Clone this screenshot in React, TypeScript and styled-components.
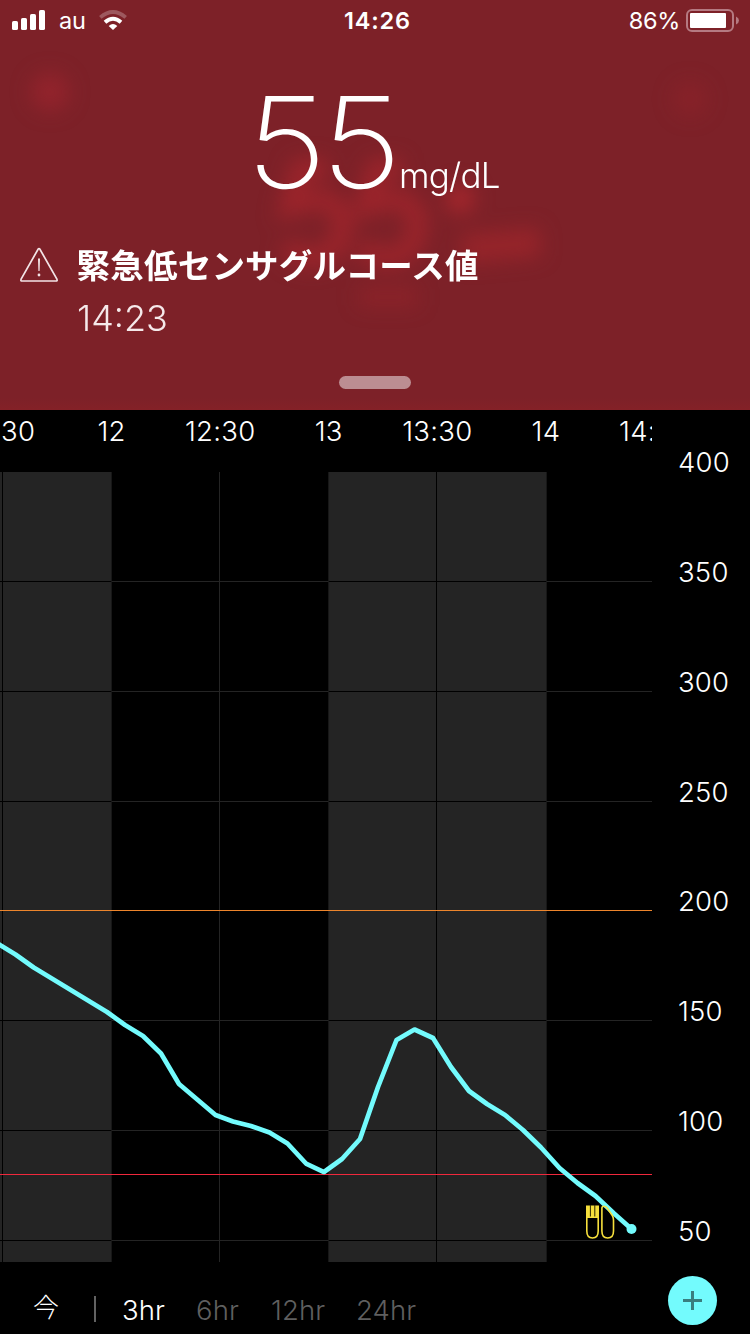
import React from "react";
import styled, { createGlobalStyle } from "styled-components";

const GlobalStyle = createGlobalStyle`
  * { box-sizing: border-box; }
  body {
    margin: 0;
    background: #000;
    color: #fff;
    font-family: Inter, "Noto Sans CJK JP", sans-serif;
  }
`;

const Screen = styled.main`
  width: 750px;
  height: 1334px;
  display: flex;
  flex-direction: column;
  overflow: hidden;
  background: #000;
`;

const Alert = styled.header`
  position: relative;
  height: 410px;
  flex: none;
  display: flex;
  flex-direction: column;
  overflow: hidden;
  background: linear-gradient(#7d2128 0, #7d2128 398px, #842127 410px);
`;

const Glow = styled.svg`
  position: absolute;
  inset: 0;
`;

const StatusBar = styled.div`
  position: relative;
  height: 40px;
  display: grid;
  grid-template-columns: 1fr auto 1fr;
  align-items: center;
  padding: 0 11px 0 12px;
  font-size: 24px;
  line-height: 38px;
`;

const StatusSide = styled.div<{ $end?: boolean }>`
  display: flex;
  align-items: center;
  justify-content: ${(p) => (p.$end ? "flex-end" : "flex-start")};
  height: 40px;
`;

const Carrier = styled.span`
  margin: 2px 13px 0 14px;
  font-size: 23.5px;
  letter-spacing: -0.2px;
`;

const Clock = styled.span`
  padding: 2px 0 0 4px;
  font-size: 23.5px;
  font-weight: 600;
  letter-spacing: 0.8px;
`;

const Percent = styled.span`
  margin: 2px 6px 0 0;
  font-size: 23.5px;
  letter-spacing: -0.3px;
`;

const Reading = styled.div`
  position: relative;
  display: flex;
  align-items: baseline;
  height: 195px;
  padding: 40px 0 0 246px;
`;

const ReadingValue = styled.span`
  width: 153px;
  font-size: 127px;
  font-weight: 165;
  line-height: 124px;
  letter-spacing: -5.2px;
  transform: scaleX(1.1);
  transform-origin: left;
`;

const ReadingUnit = styled.span`
  font-size: 35px;
  font-weight: 300;
  letter-spacing: -0.8px;
`;

const Message = styled.div`
  position: relative;
  display: grid;
  grid-template-columns: 38px 1fr;
  column-gap: 19px;
  padding-left: 20px;
`;

const WarningIcon = styled.svg`
  margin-top: 12px;
`;

const MessageTitle = styled.h1`
  margin: 0 0 2px -0.5px;
  font-size: 33.5px;
  font-weight: 700;
  line-height: 58px;
  letter-spacing: 0.22px;
  font-family: "Noto Sans CJK JP", sans-serif;
`;

const MessageTime = styled.time`
  grid-column: 2;
  font-size: 36px;
  font-weight: 300;
  line-height: 46px;
  color: #f5e9ea;
`;

const Handle = styled.div`
  position: relative;
  width: 72px;
  height: 13px;
  margin: 35px auto 0;
  border-radius: 7px;
  background: #bc8d92;
`;

const ChartArea = styled.section`
  display: flex;
  height: 852px;
  flex: none;
`;

const ChartColumn = styled.div`
  width: 652px;
  overflow: hidden;
`;

const TimeAxis = styled.div`
  display: flex;
  height: 62px;
  margin-left: -51.3px;
`;

const TimeLabel = styled.span`
  flex: none;
  width: 108.6px;
  text-align: center;
  font-size: 27.5px;
  font-weight: 300;
  line-height: 42px;
  letter-spacing: 0.3px;
`;

const Plot = styled.svg`
  display: block;
`;

const ValueAxis = styled.div`
  display: flex;
  flex-direction: column;
  padding: 30px 0 0 26px;
`;

const ValueLabel = styled.span`
  flex: none;
  height: 109.86px;
  font-size: 27.5px;
  font-weight: 300;
  line-height: 44px;
  letter-spacing: 0.2px;
`;

const Footer = styled.footer`
  display: flex;
  align-items: center;
  height: 72px;
  padding: 4px 33px 0 32px;
`;

const NowButton = styled.button`
  width: 61px;
  margin: 12px 0 0 1px;
  padding: 0;
  border: 0;
  background: none;
  color: #fff;
  font: 300 26px/40px "Noto Sans CJK JP", sans-serif;
  text-align: left;
`;

const Divider = styled.span`
  width: 2px;
  height: 26px;
  margin: 18px 26px 0 0;
  background: #626262;
`;

const Range = styled.button<{ $active?: boolean; $width: number }>`
  width: ${(p) => p.$width}px;
  padding: 0;
  border: 0;
  background: none;
  color: ${(p) => (p.$active ? "#fff" : "#5f5f5f")};
  font: 300 27.5px/40px Inter, sans-serif;
  letter-spacing: 0.1px;
  text-align: left;
  margin-top: 20px;
`;

const AddButton = styled.button`
  display: grid;
  place-items: center;
  width: 49px;
  height: 49px;
  margin: 0 0 0 auto;
  padding: 0;
  border: 0;
  border-radius: 50%;
  background: #73fbfd;
`;

const times = ["11:30", "12", "12:30", "13", "13:30", "14", "14:30"];
const values = [400, 350, 300, 250, 200, 150, 100, 50];
const ranges = [
  { label: "3hr", width: 74, active: true },
  { label: "6hr", width: 75 },
  { label: "12hr", width: 85 },
  { label: "24hr", width: 70 },
];

const readings = [
  [-3, 471], [0, 473], [15.5, 482.5], [33.7, 495.5], [107, 540], [125, 553], [143, 564],
  [161, 581.5], [179, 612], [215.5, 643], [233, 649.5], [251, 654], [269.5, 660.5],
  [287.5, 671.5], [306, 691.5], [324, 700], [342, 687], [360, 667], [378, 615],
  [396.5, 568], [414.5, 557.5], [433, 566], [451, 595], [469, 619], [487, 632],
  [505, 643], [523, 658], [541, 675.5], [559.5, 696], [577.5, 711], [595.5, 724],
  [613.5, 741], [631.5, 757],
];

const gridRows = [109, 219, 329, 438, 548, 658, 768];

const Chart = () => (
  <Plot width="652" height="790" viewBox="0 0 652 790">
    <g shapeRendering="crispEdges">
      <rect width="111" height="790" fill="#242424" />
      <rect x="329" width="217" height="790" fill="#242424" />
      {gridRows.map((y) => (
        <g key={y}>
          <rect y={y} width="652" height="1" fill="#242424" />
          <rect y={y} width="111" height="1" fill="#000" />
          <rect x="329" y={y} width="217" height="1" fill="#000" />
        </g>
      ))}
      <rect x="2" width="1" height="790" fill="#000" />
      <rect x="219" width="1" height="790" fill="#242424" />
      <rect x="436" width="1" height="790" fill="#000" />
      <rect x="111" width="1" height="790" fill="#171717" />
      <rect x="328" width="1" height="790" fill="#171717" />
      <rect x="546" width="1" height="790" fill="#171717" />
      <rect y="438" width="652" height="1" fill="#ed852c" />
      <rect y="702" width="652" height="1" fill="#f0283c" />
    </g>
    <polyline
      points={readings.map((p) => p.join(",")).join(" ")}
      fill="none"
      stroke="#73fbfd"
      strokeWidth="4.7"
      strokeLinejoin="round"
    />
    <circle cx="631.5" cy="757" r="5" fill="#73fbfd" />
    <g fill="none" stroke="#f7e03c" strokeWidth="1.6">
      <path d="M586.8 734V759Q586.8 766 592.5 766Q598.2 766 598.2 759V734" />
      <path d="M586 733.5H599V746H586Z" fill="#f7e03c" stroke="none" />
      <path d="M590.4 733V744.5M594.8 733V744.5" stroke="#2b2600" strokeWidth="1" />
      <path d="M601.9 736Q601.9 734.2 604 734.2Q606 734.2 607.5 736.5L612.3 743.5Q613.5 745.5 613.5 748V759Q613.5 766 607.7 766Q601.9 766 601.9 759Z" />
    </g>
  </Plot>
);

const Backdrop = () => (
  <Glow width="750" height="410" viewBox="0 0 750 410" aria-hidden="true">
    <defs>
      <filter id="soft" filterUnits="userSpaceOnUse" x="0" y="0" width="750" height="410" colorInterpolationFilters="sRGB">
        <feGaussianBlur stdDeviation="10" />
      </filter>
    </defs>
    <g filter="url(#soft)" fill="none" stroke="#a8262c" strokeWidth="19">
      <path d="M328 169H300L290 206Q340 188 343 224Q340 258 310 258Q294 256 286 246" opacity=".75" />
      <path d="M402 169H376L366 206Q414 188 418 224Q415 258 385 258Q369 256 361 246" opacity=".75" />
      <circle cx="460" cy="199" r="14" fill="#a8272d" stroke="none" />
      <path d="M462 249L540 242" strokeWidth="28" opacity=".6" />
      <path d="M358 297H418" strokeWidth="19" opacity=".35" />
      <circle cx="50" cy="92" r="19" fill="#a2252f" stroke="none" opacity=".6" />
      <circle cx="690" cy="99" r="18" fill="#a2252b" stroke="none" opacity=".28" />
    </g>
  </Glow>
);

export default function App() {
  return (
    <>
      <GlobalStyle />
      <Screen>
        <Alert>
          <Backdrop />
          <StatusBar>
            <StatusSide>
              <svg width="33" height="20" viewBox="0 0 33 20" fill="#fff">
                <rect y="11" width="6" height="9" rx="1.6" />
                <rect x="9" y="8" width="6" height="12" rx="1.6" />
                <rect x="18" y="4" width="6" height="16" rx="1.6" />
                <rect x="27" y="0" width="6" height="20" rx="1.6" />
              </svg>
              <Carrier>au</Carrier>
              <svg width="28" height="20" viewBox="0 0 28 20" fill="none">
                <path d="M1.3 7.4Q14-3.4 26.7 7.4" stroke="#fff" strokeOpacity=".25" strokeWidth="3.8" />
                <path d="M6 12.2Q14 5.4 22 12.2" stroke="#fff" strokeWidth="4" />
                <path d="M9.7 16Q14 12 18.3 16L14 20Z" fill="#fff" />
              </svg>
            </StatusSide>
            <Clock>14:26</Clock>
            <StatusSide $end>
              <Percent>86%</Percent>
              <svg width="53" height="23" viewBox="0 0 53 23" fill="none">
                <rect x="1" y="1" width="46" height="21" rx="5" stroke="#b57a82" strokeWidth="2" />
                <rect x="4" y="4" width="36" height="15" rx="1" fill="#fff" />
                <path d="M50 7.5Q53 9 53 11.5T50 15.5Z" fill="#b57a82" />
              </svg>
            </StatusSide>
          </StatusBar>
          <Reading>
            <ReadingValue>55</ReadingValue>
            <ReadingUnit>mg/dL</ReadingUnit>
          </Reading>
          <Message>
            <WarningIcon width="38" height="36" viewBox="0 0 38 36" fill="none" stroke="#f3e4e6" strokeWidth="1.7">
              <path d="M18.2 2Q19 1 19.8 2L36.9 32.2Q37.6 34 36 34H2Q0.4 34 1.1 32.2Z" />
              <path d="M18 11.5H20L19.6 24H18.4Z" fill="#f3e4e6" stroke="none" />
              <circle cx="19" cy="28" r="1.4" fill="#f3e4e6" stroke="none" />
            </WarningIcon>
            <MessageTitle>緊急低センサグルコース値</MessageTitle>
            <MessageTime>14:23</MessageTime>
          </Message>
          <Handle />
        </Alert>
        <ChartArea>
          <ChartColumn>
            <TimeAxis>
              {times.map((t) => (
                <TimeLabel key={t}>{t}</TimeLabel>
              ))}
            </TimeAxis>
            <Chart />
          </ChartColumn>
          <ValueAxis>
            {values.map((v) => (
              <ValueLabel key={v}>{v}</ValueLabel>
            ))}
          </ValueAxis>
        </ChartArea>
        <Footer>
          <NowButton>今</NowButton>
          <Divider />
          {ranges.map((r) => (
            <Range key={r.label} $width={r.width} $active={r.active}>
              {r.label}
            </Range>
          ))}
          <AddButton aria-label="+">
            <svg width="19" height="19" viewBox="0 0 19 19" stroke="#397e7f" strokeWidth="3">
              <path d="M9.5 0V19M0 9.5H19" />
            </svg>
          </AddButton>
        </Footer>
      </Screen>
    </>
  );
}
